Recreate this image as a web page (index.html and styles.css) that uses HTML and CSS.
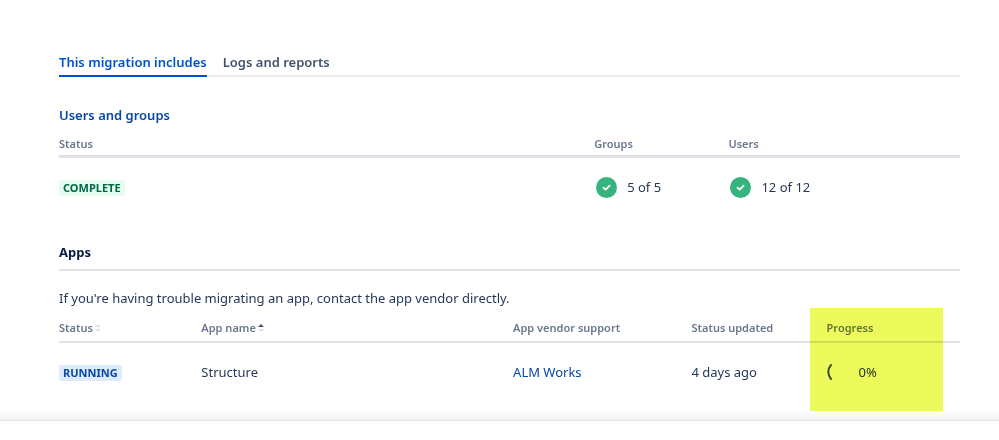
FILE: index.html
```html
<!DOCTYPE html>
<html lang="en">
<head>
<meta charset="UTF-8" />
<meta name="viewport" content="width=device-width, initial-scale=1" />
<title>Migration details</title>
<link rel="stylesheet" href="styles.css">
</head>
<body>

<main class="migration">
  <div class="tabs" role="tablist">
    <button class="tab active" type="button" role="tab" aria-selected="true">This migration includes</button>
    <button class="tab" type="button" role="tab" aria-selected="false">Logs and reports</button>
  </div>

  <section class="users">
    <h2><a href="#">Users and groups</a></h2>
    <table class="users-table">
      <thead>
        <tr>
          <th class="col-status">Status</th>
          <th class="col-groups">Groups</th>
          <th class="col-users">Users</th>
        </tr>
      </thead>
      <tbody>
        <tr>
          <td><span class="badge complete">COMPLETE</span></td>
          <td>
            <span class="count">
              <svg class="check" viewBox="0 0 24 24" aria-hidden="true"><circle cx="12" cy="12" r="12" /><path d="M8.5 12.2l2.5 2.3 4.6-4.6" /></svg>
              5 of 5
            </span>
          </td>
          <td>
            <span class="count">
              <svg class="check" viewBox="0 0 24 24" aria-hidden="true"><circle cx="12" cy="12" r="12" /><path d="M8.5 12.2l2.5 2.3 4.6-4.6" /></svg>
              12 of 12
            </span>
          </td>
        </tr>
      </tbody>
    </table>
  </section>

  <section class="apps">
    <h2>Apps</h2>
    <p>If you're having trouble migrating an app, contact the app vendor directly.</p>
    <div class="apps-wrap">
      <table class="apps-table">
        <thead>
          <tr>
            <th class="col-app-status">
              <button class="sort" type="button">Status<svg viewBox="0 0 6 8" aria-hidden="true"><path d="M0 3l3-3 3 3z" /><path d="M0 5l3 3 3-3z" /></svg></button>
            </th>
            <th class="col-name">
              <button class="sort" type="button">App name<svg viewBox="0 0 6 8" aria-hidden="true"><path class="on" d="M0 3l3-3 3 3z" /><path d="M0 5l3 3 3-3z" /></svg></button>
            </th>
            <th class="col-vendor">App vendor support</th>
            <th class="col-updated">Status updated</th>
            <th class="col-progress">Progress</th>
          </tr>
        </thead>
        <tbody>
          <tr>
            <td><span class="badge running">RUNNING</span></td>
            <td>Structure</td>
            <td><a href="#">ALM Works</a></td>
            <td>4 days ago</td>
            <td>
              <span class="progress">
                <svg class="spinner" viewBox="0 0 16 16" aria-hidden="true"><path d="M4 1C0.4 5 0.4 11 4 15" /></svg>
                0%
              </span>
            </td>
          </tr>
        </tbody>
      </table>
      <div class="highlight"></div>
    </div>
  </section>
</main>
<div class="bottom-edge"></div>

</body>
</html>
```
FILE: styles.css
```css
body {
  margin: 0;
  background: #fff;
  color: #253858;
  font-family: "Noto Sans", "Open Sans", sans-serif;
  font-size: 13px;
  line-height: 20px;
}
.migration {
  padding: 48px 39px 0 59px;
}
.tabs {
  display: flex;
  gap: 16px;
  border-bottom: 2px solid #ebecf0;
}
button {
  padding: 0;
  border: none;
  background: none;
  font: inherit;
  color: inherit;
  cursor: pointer;
}
.tab {
  margin-bottom: -2px;
  padding: 4px 0 3px;
  border-bottom: 2px solid transparent;
  font-weight: 600;
  color: #42526e;
}
.tab.active {
  color: #0052cc;
  border-color: #0052cc;
}
a {
  color: #0747a6;
  text-decoration: none;
}
h2 {
  margin: 0;
  font-size: 13px;
  line-height: 20px;
  font-weight: 600;
  color: #091e42;
}
.users {
  padding-top: 28px;
}
.users h2 {
  margin-bottom: 9px;
}
table {
  width: 100%;
  table-layout: fixed;
  border-collapse: separate;
  border-spacing: 0;
}
th {
  padding: 0;
  text-align: left;
  font-size: 11px;
  line-height: 20px;
  font-weight: 600;
  color: #6b778c;
}
td {
  height: 58px;
  padding: 0;
  vertical-align: middle;
}
.users-table th {
  padding-bottom: 1px;
  border-bottom: 3px solid #dfe1e6;
}
.col-status {
  width: 59.4%;
}
.col-groups {
  width: 14.9%;
}
.badge {
  display: inline-block;
  padding: 0 4px;
  border-radius: 3px;
  font-size: 11px;
  line-height: 16px;
  font-weight: 700;
}
.complete {
  background: #e3fcef;
  color: #006644;
}
.running {
  background: #deebff;
  color: #0747a6;
}
.count {
  display: flex;
  align-items: center;
  gap: 10px;
  padding-left: 2px;
}
.check {
  width: 21px;
  height: 21px;
}
.check circle {
  fill: #36b37e;
}
.check path {
  fill: none;
  stroke: #fff;
  stroke-width: 2;
  stroke-linecap: round;
  stroke-linejoin: round;
}
.apps {
  padding-top: 26px;
}
.apps h2 {
  padding-bottom: 7px;
  border-bottom: 2px solid #dfe1e6;
  font-weight: 700;
}
.apps p {
  margin: 17px 0 0;
}
.apps-wrap {
  position: relative;
  padding: 10px 0;
}
.apps-table th {
  padding-bottom: 3px;
  border-bottom: 2px solid #dfe1e6;
}
.col-app-status {
  width: 15.8%;
}
.col-name {
  width: 34.6%;
}
.col-vendor {
  width: 19.8%;
}
.col-updated {
  width: 15%;
}
.sort {
  display: flex;
  align-items: center;
  gap: 2px;
}
.sort svg {
  width: 6px;
  height: 8px;
  fill: #dfe1e6;
}
.sort .on {
  fill: #42526e;
}
.progress {
  display: flex;
  align-items: center;
  gap: 16px;
}
.spinner {
  width: 16px;
  height: 16px;
  fill: none;
  stroke: #42526e;
  stroke-width: 2;
  stroke-linecap: round;
}
/* marker over the progress column */
.highlight {
  position: absolute;
  top: 0;
  right: 17px;
  bottom: 0;
  width: 133px;
  background: #ecfa5c;
  mix-blend-mode: multiply;
  pointer-events: none;
}
.bottom-edge {
  height: 9px;
  border-bottom: 1px solid #e2e2e2;
  background: linear-gradient(#fff, #f2f2f2);
}
```
